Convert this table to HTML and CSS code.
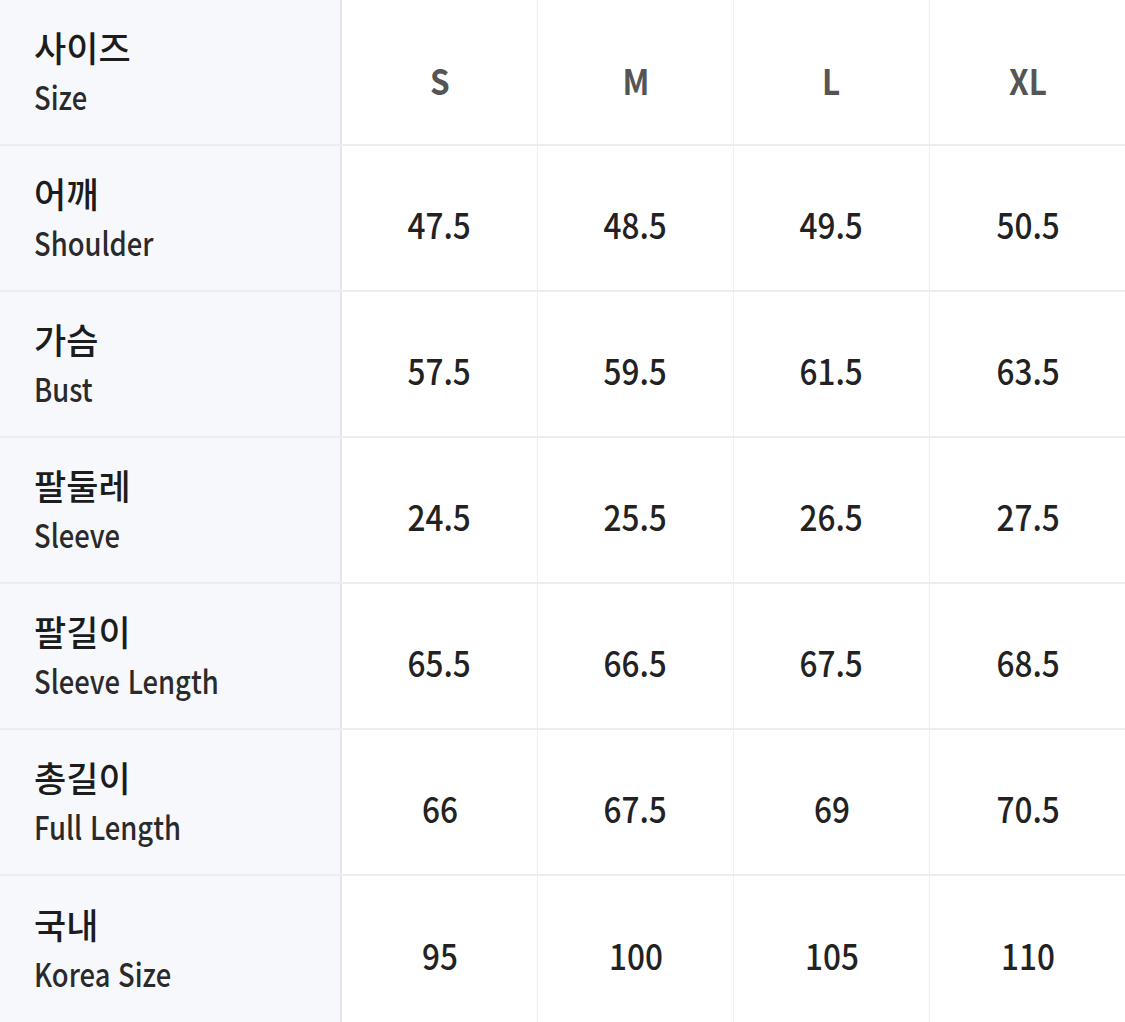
FILE: index.html
```html
<!DOCTYPE html>
<html lang="ko">
<head>
<meta charset="utf-8">
<link rel="stylesheet" href="styles.css">
</head>
<body>
<div class="table">
  <div class="row head">
    <div class="label"><span class="ko">사이즈</span><span class="en">Size</span></div>
    <div class="cell"><span class="v">S</span></div><div class="cell"><span class="v">M</span></div><div class="cell"><span class="v">L</span></div><div class="cell"><span class="v">XL</span></div>
  </div>
  <div class="row">
    <div class="label"><span class="ko">어깨</span><span class="en">Shoulder</span></div>
    <div class="cell"><span class="v">47.5</span></div><div class="cell"><span class="v">48.5</span></div><div class="cell"><span class="v">49.5</span></div><div class="cell"><span class="v">50.5</span></div>
  </div>
  <div class="row">
    <div class="label"><span class="ko">가슴</span><span class="en">Bust</span></div>
    <div class="cell"><span class="v">57.5</span></div><div class="cell"><span class="v">59.5</span></div><div class="cell"><span class="v">61.5</span></div><div class="cell"><span class="v">63.5</span></div>
  </div>
  <div class="row">
    <div class="label"><span class="ko">팔둘레</span><span class="en">Sleeve</span></div>
    <div class="cell"><span class="v">24.5</span></div><div class="cell"><span class="v">25.5</span></div><div class="cell"><span class="v">26.5</span></div><div class="cell"><span class="v">27.5</span></div>
  </div>
  <div class="row">
    <div class="label"><span class="ko">팔길이</span><span class="en">Sleeve Length</span></div>
    <div class="cell"><span class="v">65.5</span></div><div class="cell"><span class="v">66.5</span></div><div class="cell"><span class="v">67.5</span></div><div class="cell"><span class="v">68.5</span></div>
  </div>
  <div class="row">
    <div class="label"><span class="ko">총길이</span><span class="en">Full Length</span></div>
    <div class="cell"><span class="v">66</span></div><div class="cell"><span class="v">67.5</span></div><div class="cell"><span class="v">69</span></div><div class="cell"><span class="v">70.5</span></div>
  </div>
  <div class="row last">
    <div class="label"><span class="ko">국내</span><span class="en">Korea Size</span></div>
    <div class="cell"><span class="v">95</span></div><div class="cell"><span class="v">100</span></div><div class="cell"><span class="v">105</span></div><div class="cell"><span class="v">110</span></div>
  </div>
</div>
</body>
</html>
```
FILE: styles.css
```css
html, body {
  margin: 0;
  padding: 0;
  background: #ffffff;
}
body {
  font-family: "Noto Sans CJK KR", "Noto Sans", sans-serif;
  color: #222222;
}
.table {
  width: 1126px;
  display: flex;
  flex-direction: column;
}
.row {
  display: grid;
  grid-template-columns: 342px repeat(4, 196px);
  height: 146px;
  box-sizing: border-box;
  border-bottom: 2px solid #ededed;
}
.row.last {
  border-bottom: none;
}
.label {
  background: #f7f8fc;
  border-right: 2px solid #e3e5ea;
  box-sizing: border-box;
  padding-left: 34px;
  display: flex;
  flex-direction: column;
  align-items: flex-start;
  justify-content: center;
}
.ko {
  font-size: 35px;
  font-weight: 500;
  line-height: 48px;
  color: #1c1c1c;
}
.en {
  display: inline-block;
  font-size: 32px;
  font-weight: 500;
  line-height: 50px;
  color: #2a2a2a;
  transform: scaleX(0.855);
  transform-origin: left center;
  white-space: nowrap;
}
.cell {
  display: flex;
  align-items: center;
  justify-content: center;
  padding-top: 10px;
  box-sizing: border-box;
  border-right: 1px solid #f1f1f1;
}
.cell:last-child {
  border-right: none;
}
.v {
  display: inline-block;
  font-size: 35px;
  font-weight: 500;
  color: #222222;
  transform: scaleX(0.9);
}
.head .cell {
  padding-top: 14px;
}
.head .v {
  font-weight: 700;
  color: #555555;
}
```
